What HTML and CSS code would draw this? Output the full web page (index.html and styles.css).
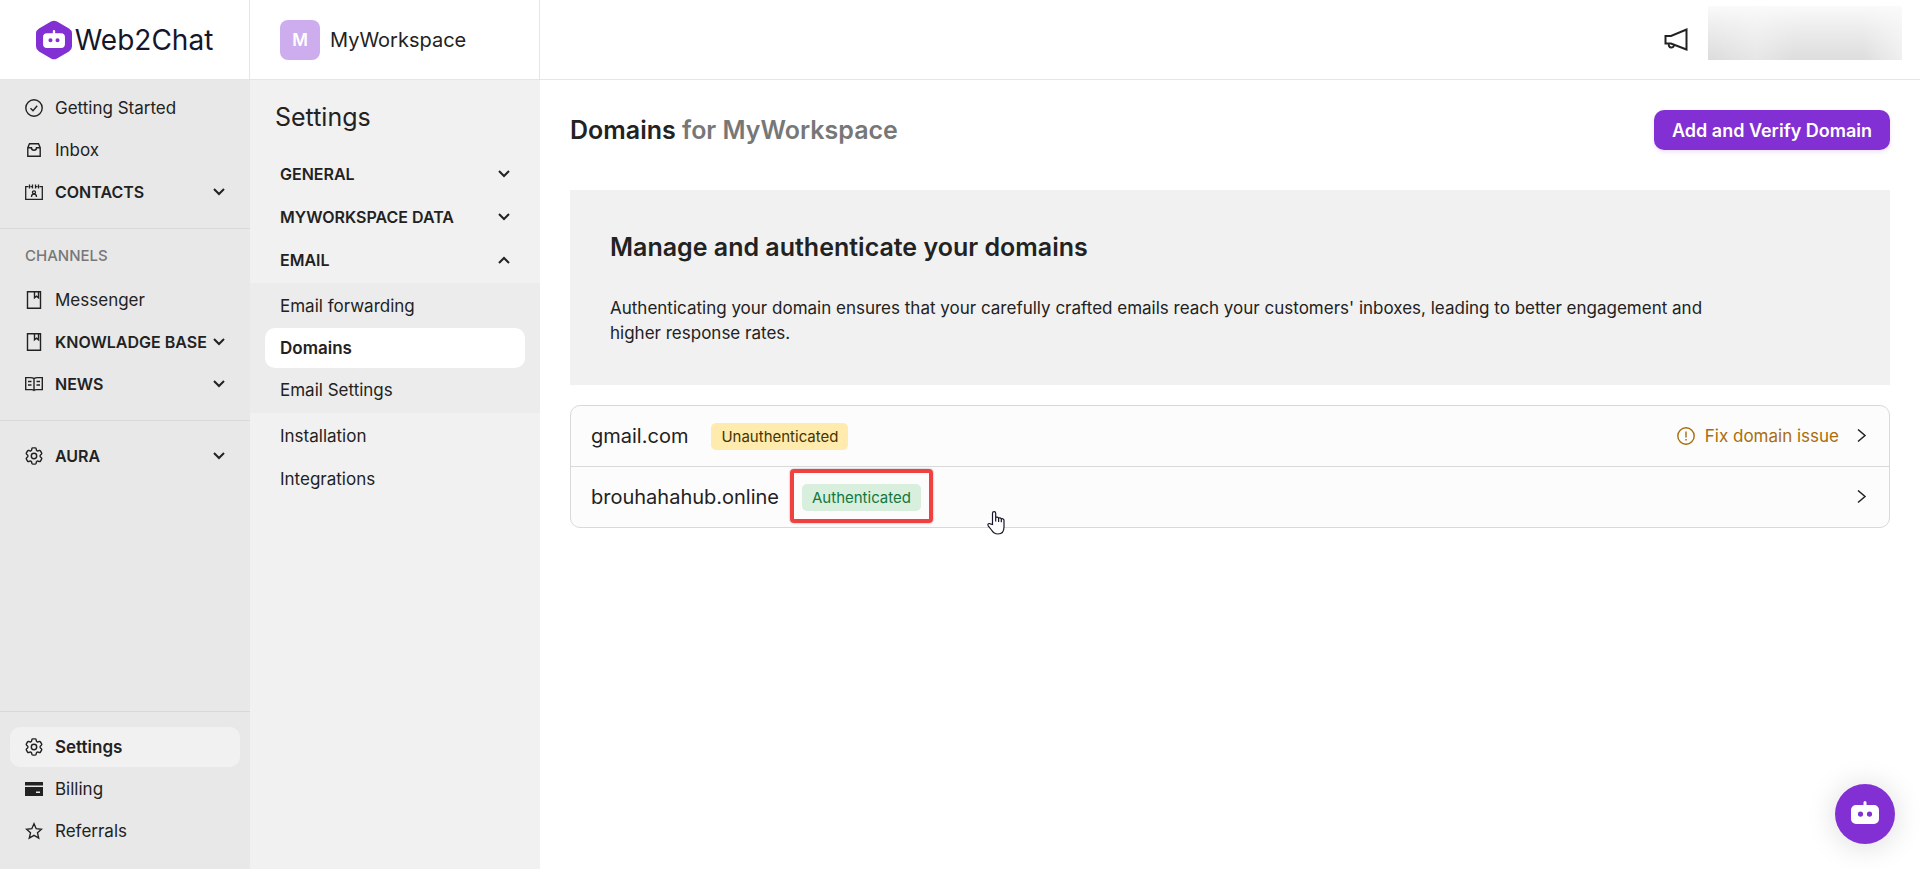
FILE: index.html
```html
<!DOCTYPE html>
<html lang="en">
<head>
    <meta charset="UTF-8">
    <meta name="viewport" content="width=device-width, initial-scale=1.0">
    <title>Web2Chat - Domains</title>
    <link rel="stylesheet" href="styles.css">
</head>
<body>

    <!-- shared icons -->
    <svg class="sprite" aria-hidden="true">
        <symbol id="chevron" viewBox="0 0 12 12">
            <path d="M1 3l5 5 5-5" fill="none" stroke="currentColor" stroke-width="2"/>
        </symbol>
        <symbol id="arrow" viewBox="0 0 10 14">
            <path d="M1 .5l7 6-7 6" fill="none" stroke="currentColor" stroke-width="1.5"/>
        </symbol>
        <symbol id="book" viewBox="0 0 18 18">
            <path d="M2.500 .8h13v16.400h-13zM9.500 .8v6l2-1.600 2 1.600v-6" fill="none" stroke="currentColor" stroke-width="1.4"/>
        </symbol>
        <symbol id="gear" viewBox="2 2 20 20">
            <path d="M9.594 3.94c.09-.542.56-.94 1.11-.94h2.593c.55 0 1.02.398 1.11.94l.213 1.281c.063.374.313.686.645.87.074.04.147.083.22.127.325.196.72.257 1.075.124l1.217-.456a1.125 1.125 0 0 1 1.37.49l1.296 2.247a1.125 1.125 0 0 1-.26 1.431l-1.003.827c-.293.241-.438.613-.43.992a7.723 7.723 0 0 1 0 .255c-.008.378.137.75.43.991l1.004.827c.424.35.534.955.26 1.43l-1.298 2.247a1.125 1.125 0 0 1-1.369.491l-1.217-.456c-.355-.133-.75-.072-1.076.124a6.47 6.47 0 0 1-.22.128c-.331.183-.581.495-.644.869l-.213 1.281c-.09.543-.56.94-1.11.94h-2.594c-.55 0-1.019-.398-1.11-.94l-.213-1.281c-.062-.374-.312-.686-.644-.87a6.52 6.52 0 0 1-.22-.127c-.325-.196-.72-.257-1.076-.124l-1.217.456a1.125 1.125 0 0 1-1.369-.49l-1.297-2.247a1.125 1.125 0 0 1 .26-1.431l1.004-.827c.292-.24.437-.613.43-.991a6.932 6.932 0 0 1 0-.255c.007-.38-.138-.751-.43-.992l-1.004-.827a1.125 1.125 0 0 1-.26-1.43l1.297-2.247a1.125 1.125 0 0 1 1.37-.491l1.216.456c.356.133.751.072 1.076-.124.072-.044.146-.086.22-.128.332-.183.582-.495.644-.869l.214-1.28Z" fill="none" stroke="currentColor" stroke-width="1.6"/>
            <circle cx="12" cy="12" r="3" fill="none" stroke="currentColor" stroke-width="1.6"/>
        </symbol>
        <symbol id="robot" viewBox="0 0 28 23">
            <path d="M12.500 1.500a1.500 1.500 0 0 1 3 0V4H23a5 5 0 0 1 5 5v9a5 5 0 0 1-5 5H5a5 5 0 0 1-5-5V9a5 5 0 0 1 5-5h7.500zM9.500 10.500a2.600 2.600 0 1 0 0 5.200 2.600 2.600 0 0 0 0-5.200zM18.500 10.500a2.600 2.600 0 1 0 0 5.200 2.600 2.600 0 0 0 0-5.200z" fill="#fff" fill-rule="evenodd"/>
        </symbol>
    </svg>

    <div class="app">
        <aside class="sidebar">
            <a class="logo" href="#">
                <svg class="logo-mark" viewBox="0 0 36 40">
                    <path d="M15 1.500a6 6 0 0 1 6 0l12 7a6 6 0 0 1 3 5v13a6 6 0 0 1-3 5l-12 7a6 6 0 0 1-6 0l-12-7a6 6 0 0 1-3-5v-13a6 6 0 0 1 3-5z" fill="#8230d3"/>
                    <use href="#robot" x="7" y="10" width="22" height="18"/>
                </svg>
                <span>Web2Chat</span>
            </a>

            <nav class="side-nav">
                <a class="nav-item" href="#">
                    <svg class="icon" viewBox="0 0 18 18" fill="none" stroke="currentColor" stroke-width="1.4"><circle cx="9" cy="9" r="8.200"/><path d="M5.500 9.200l2.500 2.500 4.200-5"/></svg>
                    <span>Getting Started</span>
                </a>
                <a class="nav-item" href="#">
                    <svg class="icon" viewBox="0 0 18 18" fill="none" stroke="currentColor" stroke-width="1.4"><path d="M4.500 2.700h9l1.700 4v8.600H2.800V6.700zM2.800 6.800h3.700c0 1.500 1 2.500 2.500 2.500s2.500-1 2.500-2.500h3.700"/></svg>
                    <span>Inbox</span>
                </a>
                <button class="nav-item group" type="button">
                    <svg class="icon" viewBox="0 0 18 18" fill="none" stroke="currentColor" stroke-width="1.3"><path d="M3.500 3.600H.7v12.800h16.600V3.600h-2.800M5.500 3.600h1.500M11 3.600h1.500M4.500 1.500v4M7.500 1.500v4M10.500 1.500v4M13.500 1.500v4"/><circle cx="9" cy="9.300" r="1.500"/><path d="M6.500 14c0-2 1-3 2.500-3s2.500 1 2.500 3"/></svg>
                    <span>CONTACTS</span>
                    <svg class="chevron"><use href="#chevron"/></svg>
                </button>
            </nav>

            <nav class="side-nav channels">
                <h2 class="nav-title">CHANNELS</h2>
                <a class="nav-item" href="#">
                    <svg class="icon"><use href="#book"/></svg>
                    <span>Messenger</span>
                </a>
                <button class="nav-item group" type="button">
                    <svg class="icon"><use href="#book"/></svg>
                    <span>KNOWLADGE BASE</span>
                    <svg class="chevron"><use href="#chevron"/></svg>
                </button>
                <button class="nav-item group" type="button">
                    <svg class="icon" viewBox="0 0 18 18" fill="none" stroke="currentColor" stroke-width="1.4"><path d="M9 3.600C8 2.800 7 2.600 5.500 2.600H.7v12h5.800c1.200 0 2 .2 2.500.8.500-.600 1.300-.8 2.500-.8h5.800v-12h-4.800C11 2.600 10 2.800 9 3.600zv11.600M3 6.500h3.500M3 10h3.500M11.500 6.500H15M11.500 10H15"/></svg>
                    <span>NEWS</span>
                    <svg class="chevron"><use href="#chevron"/></svg>
                </button>
            </nav>

            <nav class="side-nav">
                <button class="nav-item group" type="button">
                    <svg class="icon"><use href="#gear"/></svg>
                    <span>AURA</span>
                    <svg class="chevron"><use href="#chevron"/></svg>
                </button>
            </nav>

            <nav class="side-nav bottom">
                <a class="nav-item active" href="#">
                    <svg class="icon"><use href="#gear"/></svg>
                    <span>Settings</span>
                </a>
                <a class="nav-item" href="#">
                    <svg class="icon" viewBox="0 0 18 18" fill="currentColor"><path d="M0 2h18v3.500H0z"/><path d="M0 7h18v9H0zM11 11.500v1.500h4v-1.500z" fill-rule="evenodd"/></svg>
                    <span>Billing</span>
                </a>
                <a class="nav-item" href="#">
                    <svg class="icon" viewBox="0 0 18 18" fill="none" stroke="currentColor" stroke-width="1.4"><path d="M9 1.800l2.200 4.900 5.300.5-4 3.600 1.200 5.300L9 13.300l-4.700 2.800 1.200-5.300-4-3.600 5.300-.5z"/></svg>
                    <span>Referrals</span>
                </a>
            </nav>
        </aside>

        <aside class="settings">
            <div class="workspace">
                <span class="avatar">M</span>
                <span>MyWorkspace</span>
            </div>
            <h1 class="settings-title">Settings</h1>
            <nav class="settings-nav">
                <button class="menu-item group" type="button">GENERAL <svg class="chevron"><use href="#chevron"/></svg></button>
                <button class="menu-item group" type="button">MYWORKSPACE DATA <svg class="chevron"><use href="#chevron"/></svg></button>
                <button class="menu-item group" type="button">EMAIL <svg class="chevron up"><use href="#chevron"/></svg></button>
                <div class="submenu">
                    <a class="menu-item" href="#">Email forwarding</a>
                    <a class="menu-item active" href="#">Domains</a>
                    <a class="menu-item" href="#">Email Settings</a>
                </div>
                <a class="menu-item" href="#">Installation</a>
                <a class="menu-item" href="#">Integrations</a>
            </nav>
        </aside>

        <div class="page">
            <header class="topbar">
                <button class="icon-btn" type="button" aria-label="Announcements">
                    <svg viewBox="0 0 24 24" fill="none" stroke="currentColor" stroke-width="2"><path d="M22.500 1.500v20L7 15.500H1.500V8h5.500z"/><path d="M5 16a2.600 2.600 0 1 0 5 1"/></svg>
                </button>
                <div class="account"></div>
            </header>

            <main class="content">
                <div class="page-head">
                    <h2>Domains <span>for MyWorkspace</span></h2>
                    <button class="primary-btn" type="button">Add and Verify Domain</button>
                </div>

                <section class="banner">
                    <h2>Manage and authenticate your domains</h2>
                    <p>Authenticating your domain ensures that your carefully crafted emails reach your customers' inboxes, leading to better engagement and higher response rates.</p>
                </section>

                <div class="domain-list">
                    <a class="domain" href="#">
                        <span class="domain-name">gmail.com</span>
                        <span class="badge warning">Unauthenticated</span>
                        <span class="issue">
                            <svg viewBox="0 0 18 18" fill="none" stroke="currentColor" stroke-width="1.4"><circle cx="9" cy="9" r="8.200"/><path d="M9 4.500v6M9 12v1.500"/></svg>
                            Fix domain issue
                        </span>
                        <svg class="arrow"><use href="#arrow"/></svg>
                    </a>
                    <a class="domain" href="#">
                        <span class="domain-name">brouhahahub.online</span>
                        <span class="badge success marked">Authenticated</span>
                        <svg class="arrow"><use href="#arrow"/></svg>
                    </a>
                    <svg class="pointer" viewBox="0 0 18 24"><path d="M5.500 13.500V2.200a1.600 1.600 0 0 1 3.200 0V6.500c.8-.6 2.400-.4 2.900.6.8-.500 2.200-.3 2.700.7 1.300-.5 2.700.2 2.700 1.700v6.500c0 4.500-2 7-6 7-3.500 0-5-1.500-6.500-4L1.200 14.800c-.900-1.700.8-2.900 2.200-1.900zM8.700 6.500v4M11.600 7v4M14.300 7.800v3.500" fill="#fff" stroke="#16162a" stroke-width="1.2"/></svg>
                </div>
            </main>
        </div>
    </div>

    <button class="chat-btn" type="button" aria-label="Open chat">
        <svg><use href="#robot"/></svg>
    </button>

</body>
</html>
```
FILE: styles.css
```css
* {
    box-sizing: border-box;
}
body {
    margin: 0;
    font-family: Inter, "Liberation Sans", sans-serif;
    font-size: 17px;
    color: #222;
    background: #fff;
}
a {
    color: inherit;
    text-decoration: none;
}
button {
    font: inherit;
    color: inherit;
    background: none;
    border: none;
    padding: 0;
    cursor: pointer;
}
h1, h2, p {
    margin: 0;
}
.sprite {
    display: none;
}
.app {
    display: grid;
    grid-template-columns: 250px 290px 1fr;
    min-height: 100vh;
}

/* left sidebar */
.sidebar {
    display: flex;
    flex-direction: column;
    background: #e8e8e8;
}
.logo {
    display: flex;
    align-items: center;
    justify-content: center;
    gap: 3px;
    height: 80px;
    background: #fff;
    border-right: 1px solid #e5e5e5;
    border-bottom: 1px solid #e5e5e5;
    font-size: 28px;
    color: #16162a;
}
.logo-mark {
    width: 36px;
    height: 40px;
}
.side-nav {
    display: flex;
    flex-direction: column;
    gap: 2px;
    padding: 15px 10px 16px;
}
.side-nav:first-of-type {
    padding-top: 8px;
}
.side-nav.channels {
    border-top: 1px solid #d8d8d8;
    border-bottom: 1px solid #d8d8d8;
}
.side-nav.bottom {
    margin-top: auto;
    padding-bottom: 18px;
    border-top: 1px solid #d8d8d8;
}
.nav-title {
    padding: 0 15px;
    margin-bottom: 10px;
    font-size: 15px;
    font-weight: 500;
    line-height: 24px;
    color: #777;
}
.nav-item {
    display: flex;
    align-items: center;
    gap: 12px;
    height: 40px;
    padding: 0 15px;
    border-radius: 10px;
    white-space: nowrap;
}
.nav-item.active {
    background: #f1f1f1;
    font-weight: 600;
}
.group {
    font-size: 16px;
    font-weight: 600;
}
.icon {
    width: 18px;
    height: 18px;
    flex: none;
}
.chevron {
    width: 12px;
    height: 12px;
    margin-left: auto;
    flex: none;
}
.chevron.up {
    transform: rotate(180deg);
}
.nav-item.group span {
    margin-right: -6px;
}

/* settings column */
.settings {
    background: #f1f1f1;
}
.workspace {
    display: flex;
    align-items: center;
    gap: 10px;
    height: 80px;
    padding: 0 30px;
    background: #fff;
    border-right: 1px solid #e5e5e5;
    border-bottom: 1px solid #e5e5e5;
    font-size: 20px;
}
.avatar {
    display: flex;
    align-items: center;
    justify-content: center;
    width: 40px;
    height: 40px;
    border-radius: 8px;
    background: #cdadee;
    color: #fff;
    font-size: 17px;
    font-weight: 600;
}
.settings-title {
    padding: 22px 25px;
    font-size: 25px;
    font-weight: 400;
    line-height: 30px;
}
.settings-nav {
    display: flex;
    flex-direction: column;
    gap: 3px;
}
.submenu {
    display: flex;
    flex-direction: column;
    gap: 2px;
    padding: 3px 0;
    background: #ececec;
}
.menu-item {
    display: flex;
    align-items: center;
    height: 40px;
    margin: 0 15px;
    padding: 0 15px;
    border-radius: 10px;
}
.menu-item.active {
    background: #fff;
    font-weight: 600;
}

/* main area */
.topbar {
    display: flex;
    align-items: center;
    justify-content: flex-end;
    gap: 20px;
    height: 80px;
    padding: 0 18px;
    border-bottom: 1px solid #e5e5e5;
}
.icon-btn svg {
    display: block;
    width: 24px;
    height: 24px;
}
.account {
    width: 194px;
    height: 54px;
    margin-bottom: 13px;
    background:
        linear-gradient(to bottom, #fafafa, rgba(250, 250, 250, 0.6) 40%, rgba(250, 250, 250, 0.1)),
        linear-gradient(to right, #d8d8d8, #e4e4e4 25%, #dadada 45%, #dadada 80%, #eee);
}
.content {
    padding: 30px;
}
.page-head {
    display: flex;
    align-items: center;
    justify-content: space-between;
    margin-bottom: 40px;
}
.page-head h2,
.banner h2 {
    font-size: 25px;
    font-weight: 600;
    line-height: 30px;
}
.page-head h2 span {
    color: #777;
}
.primary-btn {
    height: 40px;
    padding: 0 18px;
    border-radius: 10px;
    background: #8230d3;
    box-shadow: 0 2px 4px rgba(130, 48, 211, 0.15);
    color: #fff;
    font-size: 18px;
    font-weight: 600;
}
.banner {
    padding: 42px 40px 39px;
    margin-bottom: 20px;
    background: #f1f1f1;
}
.banner p {
    max-width: 1140px;
    margin-top: 34px;
    line-height: 25px;
}
.domain-list {
    position: relative;
    border: 1px solid #d9d9d9;
    border-radius: 10px;
    background: #fcfcfc;
}
.domain {
    display: flex;
    align-items: center;
    box-sizing: content-box;
    height: 60px;
    padding: 0 22px 0 20px;
}
.domain + .domain {
    border-top: 1px solid #d9d9d9;
}
.domain-name {
    margin-right: 23px;
    font-size: 20px;
}
.badge {
    position: relative;
    padding: 0 10px;
    border-radius: 5px;
    font-size: 15px;
    line-height: 27px;
}
.badge.warning {
    background: #ffebad;
    color: #453500;
}
.badge.success {
    background: #d8efdd;
    color: #13773f;
}
.badge.marked::after {
    content: "";
    position: absolute;
    inset: -15px -12px -12px;
    border: 4px solid #f04040;
    border-radius: 4px;
    box-shadow: 0 0 2px rgba(0, 0, 0, 0.4);
}
.issue {
    display: flex;
    align-items: center;
    gap: 10px;
    margin-left: auto;
    color: #a86e0c;
}
.issue svg {
    width: 18px;
    height: 18px;
}
.arrow {
    width: 10px;
    height: 14px;
    margin-left: 18px;
}
.badge + .arrow {
    margin-left: auto;
}
.pointer {
    position: absolute;
    left: 416px;
    top: 105px;
    width: 18px;
    height: 24px;
}
.chat-btn {
    position: fixed;
    right: 25px;
    bottom: 25px;
    display: flex;
    align-items: center;
    justify-content: center;
    width: 60px;
    height: 60px;
    padding-bottom: 4px;
    border-radius: 50%;
    background: #8230d3;
    box-shadow: 0 2px 30px rgba(0, 0, 0, 0.15);
}
.chat-btn svg {
    width: 28px;
    height: 23px;
}
```
